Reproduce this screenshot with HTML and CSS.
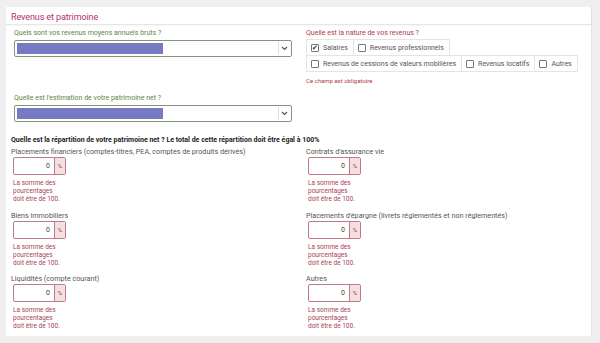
FILE: index.html
```html
<!DOCTYPE html>
<html lang="fr">
<head>
    <meta charset="UTF-8">
    <title>Revenus et patrimoine</title>
    <link rel="stylesheet" href="styles.css">
</head>
<body>
    <div class="panel">
        <h2 class="panel-title">Revenus et patrimoine</h2>

        <div class="top-grid">
            <div class="col">
                <div class="field">
                    <label class="label-ok">Quels sont vos revenus moyens annuels bruts ?</label>
                    <div class="select">
                        <span class="select-value"></span>
                        <span class="select-arrow"><svg width="7" height="5" viewBox="0 0 7 5"><path d="M1 1l2.5 2.5L6 1" fill="none" stroke="#555" stroke-width="1.2"/></svg></span>
                    </div>
                </div>
                <div class="field field-second">
                    <label class="label-ok">Quelle est l'estimation de votre patrimoine net ?</label>
                    <div class="select">
                        <span class="select-value"></span>
                        <span class="select-arrow"><svg width="7" height="5" viewBox="0 0 7 5"><path d="M1 1l2.5 2.5L6 1" fill="none" stroke="#555" stroke-width="1.2"/></svg></span>
                    </div>
                </div>
            </div>

            <div class="col">
                <label class="label-err">Quelle est la nature de vos revenus ?</label>
                <div class="checks">
                    <span class="check"><span class="box checked">&#10004;</span>Salaires</span>
                    <span class="check"><span class="box"></span>Revenus professionnels</span>
                </div>
                <div class="checks">
                    <span class="check"><span class="box"></span>Revenus de cessions de valeurs mobilières</span>
                    <span class="check"><span class="box"></span>Revenus locatifs</span>
                    <span class="check"><span class="box"></span>Autres</span>
                </div>
                <p class="required">Ce champ est obligatoire</p>
            </div>
        </div>

        <h3 class="split-title">Quelle est la répartition de votre patrimoine net ? Le total de cette répartition doit être égal à 100%</h3>

        <div class="split-grid">
            <div class="pct-field">
                <label>Placements financiers (comptes-titres, PEA, comptes de produits dérivés)</label>
                <div class="pct-input"><span class="pct-value">0</span><span class="pct-addon">%</span></div>
                <p class="pct-error">La somme des<br>pourcentages<br>doit être de 100.</p>
            </div>
            <div class="pct-field">
                <label>Contrats d'assurance vie</label>
                <div class="pct-input"><span class="pct-value">0</span><span class="pct-addon">%</span></div>
                <p class="pct-error">La somme des<br>pourcentages<br>doit être de 100.</p>
            </div>
            <div class="pct-field">
                <label>Biens immobiliers</label>
                <div class="pct-input"><span class="pct-value">0</span><span class="pct-addon">%</span></div>
                <p class="pct-error">La somme des<br>pourcentages<br>doit être de 100.</p>
            </div>
            <div class="pct-field">
                <label>Placements d'épargne (livrets réglementés et non réglementés)</label>
                <div class="pct-input"><span class="pct-value">0</span><span class="pct-addon">%</span></div>
                <p class="pct-error">La somme des<br>pourcentages<br>doit être de 100.</p>
            </div>
            <div class="pct-field">
                <label>Liquidités (compte courant)</label>
                <div class="pct-input"><span class="pct-value">0</span><span class="pct-addon">%</span></div>
                <p class="pct-error">La somme des<br>pourcentages<br>doit être de 100.</p>
            </div>
            <div class="pct-field">
                <label>Autres</label>
                <div class="pct-input"><span class="pct-value">0</span><span class="pct-addon">%</span></div>
                <p class="pct-error">La somme des<br>pourcentages<br>doit être de 100.</p>
            </div>
        </div>
    </div>
</body>
</html>
```

FILE: styles.css
```css
* {
    margin: 0;
    padding: 0;
    box-sizing: border-box;
}

body {
    font-family: 'Roboto', 'Liberation Sans', sans-serif;
    background: #efefef;
    color: #555;
    font-size: 7px;
}

.panel {
    background: #fff;
    margin: 7px 8px 7px 6px;
    height: 329px;
    border-right: 1px solid #e4e4e4;
}

.panel-title {
    font-size: 9px;
    letter-spacing: -0.1px;
    line-height: 12px;
    font-weight: normal;
    color: #b0306e;
    padding: 4px 5px 1px;
    border-bottom: 1px solid #e6e6e6;
    box-shadow: 0 1px 2px rgba(0, 0, 0, 0.04);
}

.top-grid {
    display: grid;
    grid-template-columns: 278px 1fr;
    column-gap: 14px;
    padding: 4px 8px 0 8px;
}

.field-second {
    margin-top: 37px;
}

.label-ok {
    display: block;
    color: #5f8447;
    font-size: 7px;
    line-height: 9px;
    margin-bottom: 2px;
}

.label-err {
    display: block;
    color: #b03a4a;
    font-size: 7px;
    line-height: 9px;
    margin-bottom: 1px;
}

.select {
    display: flex;
    align-items: center;
    height: 17px;
    border: 1px solid #849676;
    border-radius: 2px;
    padding: 2px;
}

.select-value {
    width: 146px;
    height: 11px;
    background: #7879c3;
}

.select-arrow {
    margin-left: auto;
    width: 11px;
    height: 13px;
    border-left: 1px solid #ddd;
    display: flex;
    align-items: center;
    justify-content: center;
}

.checks {
    display: flex;
}

.check {
    display: flex;
    align-items: center;
    gap: 4px;
    height: 17px;
    padding: 0 5px 0 4px;
    border: 1px solid #e4e4e4;
    margin-right: -1px;
    margin-bottom: -1px;
    color: #555;
    font-size: 7px;
    white-space: nowrap;
}

.box {
    width: 8px;
    height: 8px;
    border: 1px solid #777;
    border-radius: 1px;
    font-size: 7px;
    line-height: 6px;
    color: #333;
    text-align: center;
}

.required {
    color: #b03a4a;
    font-size: 6px;
    margin-top: 6px;
}

.split-title {
    font-size: 7px;
    line-height: 9px;
    font-weight: bold;
    color: #222;
    padding: 14px 5px 0;
}

.split-grid {
    display: grid;
    grid-template-columns: 295px 1fr;
    padding: 3px 5px 0;
}

.pct-field label {
    display: block;
    font-size: 7.2px;
    line-height: 8px;
    color: #555;
    margin-bottom: 1px;
}

.pct-field {
    margin-bottom: 8.5px;
}

.pct-input {
    display: flex;
    width: 53px;
    height: 18px;
    margin-left: 2px;
    border: 1px solid #c07a86;
    border-radius: 2px;
}

.pct-value {
    flex: 1;
    text-align: right;
    padding-right: 4px;
    line-height: 16px;
    font-size: 7px;
    color: #444;
}

.pct-addon {
    width: 11px;
    background: #f4dfe2;
    border-left: 1px solid #c07a86;
    color: #b03a4a;
    font-size: 6px;
    line-height: 16px;
    text-align: center;
}

.pct-error {
    margin: 4px 0 0 2px;
    color: #a84454;
    font-size: 6.5px;
    line-height: 8px;
}
```
